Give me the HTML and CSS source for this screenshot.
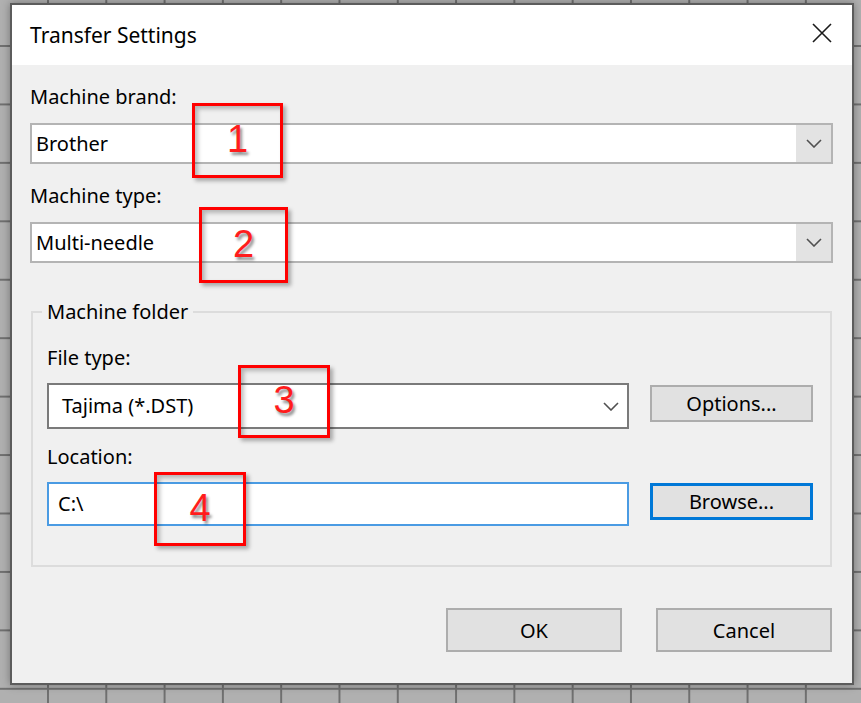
FILE: index.html
```html
<!DOCTYPE html>
<html lang="en">
<head>
    <meta charset="UTF-8">
    <meta name="viewport" content="width=device-width, initial-scale=1.0">
    <title>Transfer Settings</title>
    <link rel="stylesheet" href="styles.css">
</head>
<body>
    <div class="dialog">
        <div class="titlebar">
            <span class="title">Transfer Settings</span>
            <span class="close">
                <svg width="20" height="20" viewBox="0 0 20 20"><path d="M1 1L19 19M19 1L1 19" stroke="#1a1a1a" stroke-width="1.6" fill="none"/></svg>
            </span>
        </div>

        <div class="content">
            <div class="field-label">Machine brand:</div>
            <div class="combo editable">
                <span class="combo-value">Brother</span>
                <span class="drop-button">
                    <svg width="16" height="9" viewBox="0 0 16 9"><path d="M1 1L8 8L15 1" stroke="#505050" stroke-width="1.6" fill="none"/></svg>
                </span>
            </div>

            <div class="field-label gap-top">Machine type:</div>
            <div class="combo editable">
                <span class="combo-value">Multi-needle</span>
                <span class="drop-button">
                    <svg width="16" height="9" viewBox="0 0 16 9"><path d="M1 1L8 8L15 1" stroke="#505050" stroke-width="1.6" fill="none"/></svg>
                </span>
            </div>

            <fieldset class="group">
                <legend>Machine folder</legend>

                <div class="field-label group-first">File type:</div>
                <div class="row">
                    <div class="combo list">
                        <span class="combo-value">Tajima (*.DST)</span>
                        <svg class="list-arrow" width="16" height="9" viewBox="0 0 16 9"><path d="M1 1L8 8L15 1" stroke="#505050" stroke-width="1.6" fill="none"/></svg>
                    </div>
                    <button class="btn side-btn">Options...</button>
                </div>

                <div class="field-label group-next">Location:</div>
                <div class="row">
                    <div class="text-input">C:\</div>
                    <button class="btn side-btn default-btn">Browse...</button>
                </div>
            </fieldset>

            <div class="actions">
                <button class="btn action-btn">OK</button>
                <button class="btn action-btn">Cancel</button>
            </div>
        </div>

        <!-- annotation callouts drawn over the dialog -->
        <div class="callout callout-1">1</div>
        <div class="callout callout-2">2</div>
        <div class="callout callout-3">3</div>
        <div class="callout callout-4">4</div>
    </div>
</body>
</html>
```

FILE: styles.css
```css
body {
    margin: 0;
    width: 861px;
    height: 703px;
    overflow: hidden;
    font-family: "Noto Sans", "Open Sans", sans-serif;
    background-color: #b0b0b0; /* grid canvas behind the dialog */
    background-image:
        linear-gradient(to right, #707070 2px, transparent 2px),
        linear-gradient(to bottom, #707070 2px, transparent 2px);
    background-size: 58.3px 58.45px;
    background-position: -11.3px -13.45px;
}

.dialog {
    position: relative;
    box-sizing: border-box;
    width: 844px;
    height: 682px;
    margin: 3px 0 0 10px;
    border: 2px solid #5c5c5c;
    background: #f0f0f0;
    box-shadow: 0 0 8px rgba(0, 0, 0, 0.35);
    color: #000;
    font-size: 20px;
    line-height: 24px;
}

.titlebar {
    display: flex;
    align-items: center;
    justify-content: space-between;
    height: 60px;
    padding: 0 20px 0 18px;
    background: #fff;
}

.title {
    font-size: 21px;
}

.close {
    display: flex;
    align-self: flex-start;
    margin-top: 18px;
}

.content {
    padding: 20px 19px 0 18px;
}

.field-label {
    height: 24px;
}

.gap-top {
    margin-top: 20px;
}

.combo {
    display: flex;
    align-items: center;
    box-sizing: border-box;
    background: #fff;
}

.editable {
    height: 41px;
    margin-top: 14px;
    border: 2px solid #b4b4b4;
}

.editable .combo-value {
    flex: 1;
    padding-left: 4px;
}

.drop-button {
    display: flex;
    align-items: center;
    justify-content: center;
    width: 35px;
    height: 100%;
    background: #e3e3e3;
}

.group {
    margin: 37px 1px 0 1px;
    padding: 0 17px 39px 14px;
    border: 2px solid #dcdcdc;
}

.group legend {
    padding: 0 5px;
    margin-left: -5px;
}

.group-first {
    margin-top: 22px;
}

.group-next {
    margin-top: 16px;
}

.row {
    display: flex;
    align-items: flex-start;
    gap: 21px;
    margin-top: 13px;
}

.list {
    flex: 1;
    height: 46px;
    border: 2px solid #7a7a7a;
    padding: 0 8px 0 13px;
}

.list .combo-value {
    flex: 1;
}

.text-input {
    flex: 1;
    box-sizing: border-box;
    height: 44px;
    padding: 8px 9px 0;
    border: 2px solid #4a9be3;
    background: #fff;
}

.btn {
    box-sizing: border-box;
    font-family: inherit;
    font-size: 20px;
    color: #000;
    background: #e1e1e1;
    border: 2px solid #adadad;
    padding: 0;
}

.side-btn {
    width: 163px;
    height: 37px;
    margin-top: 2px;
}

.default-btn {
    border: 3px solid #0078d7;
    margin-top: 1px;
}

.actions {
    display: flex;
    justify-content: flex-end;
    gap: 34px;
    margin-top: 41px;
    padding-right: 1px;
}

.action-btn {
    width: 176px;
    height: 44px;
}

.callout {
    position: absolute;
    box-sizing: border-box;
    display: flex;
    align-items: center;
    justify-content: center;
    border: 3px solid #ff0000;
    box-shadow: 3px 3px 4px rgba(0, 0, 0, 0.3), inset 3px 3px 4px rgba(0, 0, 0, 0.25);
    font-family: "Liberation Sans", Arial, sans-serif;
    font-size: 38px;
    line-height: 1;
    color: #ff1c1c;
    text-shadow: 2px 3px 3px rgba(0, 0, 0, 0.45);
    padding-bottom: 3px;
}

.callout-1 { left: 180px; top: 98px; width: 91px; height: 75px; }
.callout-2 { left: 187px; top: 202px; width: 89px; height: 76px; }
.callout-3 { left: 226px; top: 360px; width: 92px; height: 73px; }
.callout-4 { left: 142px; top: 467px; width: 92px; height: 74px; }
```
